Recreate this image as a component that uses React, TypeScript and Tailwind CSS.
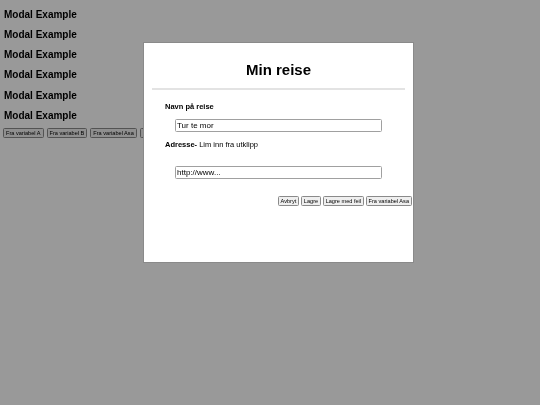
import React from "react";

const font = { fontFamily: '"Liberation Sans", Arial, sans-serif' };

function SmallBtn({ children }: { children: React.ReactNode }) {
  return (
    <button className="h-[10px] px-[2px] border border-[#8a8a8a] rounded-[1.5px] bg-[#efefef] text-[5.6px] leading-[8px] text-black whitespace-nowrap">
      {children}
    </button>
  );
}

export default function App() {
  return (
    <div style={font} className="relative w-[540px] h-[405px] bg-white overflow-hidden will-change-transform">
      <div className="pt-[8.5px] pl-[4px] flex flex-col gap-[8.3px]">
        {Array.from({ length: 6 }).map((_, i) => (
          <h3 key={i} className="text-[10px] leading-[12px] font-bold text-black">
            Modal Example
          </h3>
        ))}
      </div>
      <div className="flex gap-[3px] pl-[3px] mt-[6px]">
        <SmallBtn>Fra variabel A</SmallBtn>
        <SmallBtn>Fra variabel B</SmallBtn>
        <SmallBtn>Fra variabel Asa</SmallBtn>
        <SmallBtn>Fra variabel B</SmallBtn>
      </div>
      <div className="absolute inset-0 bg-black/40" />
      <div className="absolute left-[143px] top-[42px] w-[271px] h-[221px] bg-white border border-[#8a8a8a] flex flex-col will-change-transform">
        <h2 className="text-[15px] leading-[18px] font-bold text-black text-center mt-[18px]">Min reise</h2>
        <div className="mx-[8px] mt-[9px] h-[2px] bg-[#e3e3e3]" />
        <div className="pl-[21px] mt-[12px] text-[7.5px] leading-[9px] text-black">
          <div className="font-bold">Navn på reise</div>
          <input
            readOnly
            value="Tur te mor"
            className="block mt-[8px] ml-[10px] w-[207px] h-[13px] border border-[#a0a0a0] rounded-[1.5px] px-[1px] text-[8px] leading-[10px] text-black outline-none"
            style={font}
          />
          <div className="mt-[8px]"><span className="font-bold">Adresse-</span> Lim inn fra utklipp</div>
          <input
            readOnly
            value="http://www..."
            className="block mt-[17px] ml-[10px] w-[207px] h-[13px] border border-[#a0a0a0] rounded-[1.5px] px-[1px] text-[8px] leading-[10px] text-black outline-none"
            style={font}
          />
        </div>
        <div className="flex justify-end gap-[1.5px] pr-[1px] mt-[17px]">
          <SmallBtn>Avbryt</SmallBtn>
          <SmallBtn>Lagre</SmallBtn>
          <SmallBtn>Lagre med feil</SmallBtn>
          <SmallBtn>Fra variabel Asa</SmallBtn>
        </div>
      </div>
    </div>
  );
}
